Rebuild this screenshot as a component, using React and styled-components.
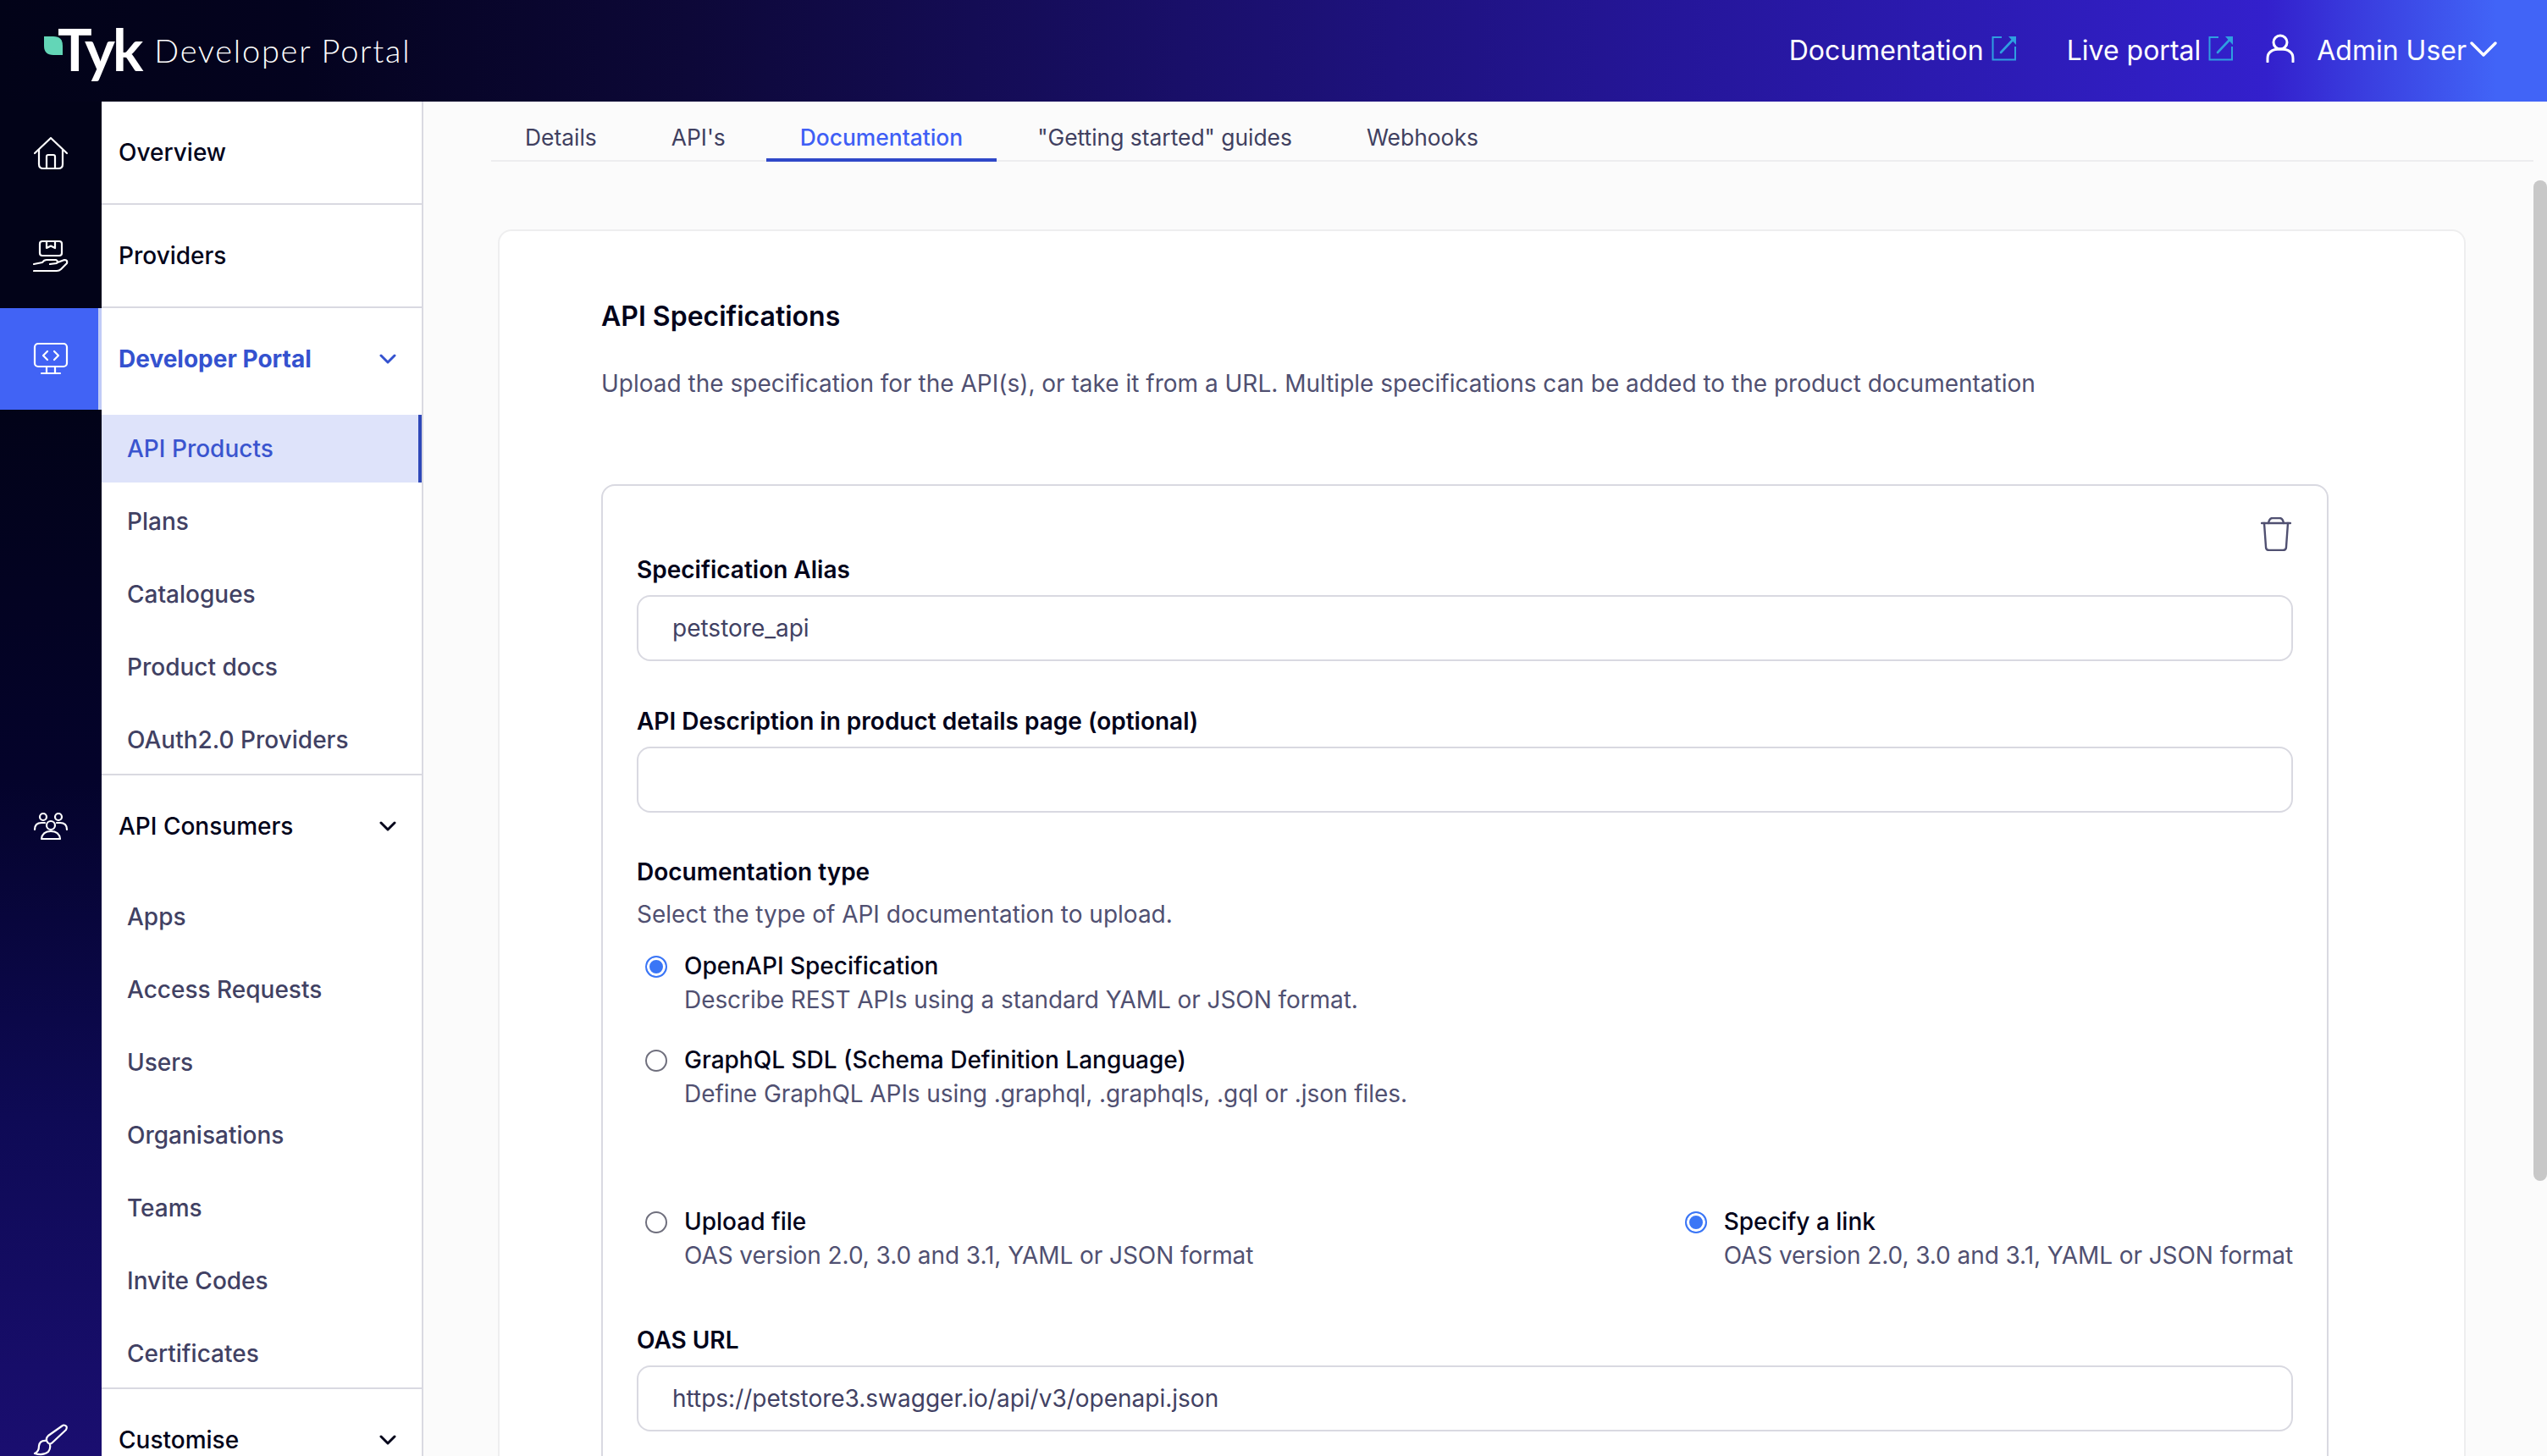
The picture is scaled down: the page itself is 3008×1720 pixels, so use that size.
import React from 'react';
import styled, { createGlobalStyle } from 'styled-components';

const GlobalStyle = createGlobalStyle`
  html, body {
    margin: 0;
    padding: 0;
    height: 100%;
    overflow: hidden;
    background: #fbfbfb;
    font-family: Inter, "Liberation Sans", sans-serif;
    color: #02031a;
  }
  * { box-sizing: border-box; }
`;

const Page = styled.div`
  width: 3008px;
  height: 1720px;
  display: flex;
  flex-direction: column;
  overflow: hidden;
`;

const Header = styled.header`
  flex: 0 0 120px;
  display: flex;
  align-items: center;
  padding: 0 59px 0 52px;
  background: linear-gradient(90deg, #020318 0%, #04031f 12%, #0d0838 27%, #25169a 66%, #3320cc 89%, #3a3fe0 93%, #4164f7 98%);
`;

const Logo = styled.div`
  display: flex;
  align-items: center;
  color: #fff;
`;

const Leaf = styled.svg`
  width: 22px;
  height: 22px;
  margin: 0 -6px 0 0;
  position: relative;
  top: -6px;
`;

const LogoMark = styled.span`
  font-family: Lato, sans-serif;
  font-weight: 700;
  font-size: 68px;
  letter-spacing: -3px;
  line-height: 80px;
  position: relative;
  top: -2px;
`;

const LogoText = styled.span`
  font-family: Lato, sans-serif;
  font-weight: 300;
  font-size: 38px;
  letter-spacing: 1.75px;
  margin-left: 16px;
  position: relative;
  top: -1px;
`;

const TopNav = styled.nav`
  margin-left: auto;
  display: flex;
  align-items: center;
`;

const TopLink = styled.a`
  display: flex;
  align-items: center;
  color: #fff;
  font-size: 32px;
  line-height: 40px;
  margin-right: ${(p) => p.$gap}px;
`;

const ExternalIcon = styled.svg`
  width: 30px;
  height: 30px;
  margin: -6px 0 0 9px;
`;

const UserIcon = styled.svg`
  width: 34px;
  height: 34px;
  margin: -6px 26px 0 0;
`;

const Caret = styled.svg`
  width: 32px;
  height: 18px;
  margin: -4px 0 0 4px;
`;

const Body = styled.div`
  flex: 1;
  display: flex;
  min-height: 0;
`;

const Rail = styled.aside`
  flex: 0 0 120px;
  display: flex;
  flex-direction: column;
  background: linear-gradient(180deg, #020318 0%, #020318 22%, #04032b 50%, #0e0a55 75%, #1a0e70 100%);
`;

const RailItem = styled.div`
  flex: 0 0 ${(p) => p.$height}px;
  margin-top: ${(p) => p.$offset || 0}px;
  display: flex;
  align-items: center;
  justify-content: center;
  background: ${(p) => (p.$active ? '#4163f5' : 'transparent')};
  border-right: ${(p) => (p.$active ? '4px solid #c0cbf6' : 'none')};
  padding-left: ${(p) => (p.$active ? '4px' : '0')};
`;

const RailIcon = styled.svg`
  width: 42px;
  height: 40px;
  fill: none;
  stroke: #fff;
  stroke-width: 2.2;
  stroke-linecap: round;
  stroke-linejoin: round;
`;

const Sidebar = styled.aside`
  flex: 0 0 380px;
  background: #fff;
  border-right: 2px solid #d9d9e1;
  display: flex;
  flex-direction: column;
`;

const NavGroup = styled.div`
  border-bottom: 2px solid #d9d9e1;
  &:last-child { border-bottom: none; }
`;

const NavHead = styled.div`
  height: 120px;
  display: flex;
  align-items: center;
  justify-content: space-between;
  padding: 0 30px 0 20px;
  font-size: 28px;
  font-weight: ${(p) => (p.$active ? 700 : 500)};
  color: ${(p) => (p.$active ? '#3452cf' : '#02031a')};
`;

const NavChevron = styled.svg`
  width: 20px;
  height: 14px;
  fill: none;
  stroke: ${(p) => (p.$active ? '#3452cf' : '#02031a')};
  stroke-width: 3;
  stroke-linecap: round;
  stroke-linejoin: round;
`;

const NavList = styled.div`
  display: flex;
  flex-direction: column;
  gap: 6px;
  padding-top: ${(p) => p.$top || 0}px;
`;

const NavItem = styled.div`
  height: 80px;
  padding-left: 30px;
  display: flex;
  align-items: center;
  font-size: 28px;
  font-weight: 500;
  color: ${(p) => (p.$active ? '#3a55cf' : '#414163')};
  background: ${(p) => (p.$active ? '#dee3fa' : 'transparent')};
  border-right: ${(p) => (p.$active ? '4px solid #2f48b8' : 'none')};
`;

const Main = styled.main`
  position: relative;
  flex: 1;
  min-width: 0;
  overflow: hidden;
  background: #fbfbfb;
  padding-left: 80px;
`;

const ScrollThumb = styled.div`
  position: absolute;
  right: 0;
  top: 93px;
  width: 16px;
  height: 1182px;
  background: #c8c8c8;
  border-radius: 8px;
`;

const Tabs = styled.div`
  height: 71px;
  margin-right: 16px;
  display: flex;
  gap: 8px;
  border-bottom: 2px solid #ededef;
`;

const Tab = styled.div`
  height: 71px;
  padding: 12px 40px 0;
  display: flex;
  align-items: center;
  font-size: 26.4px;
  white-space: nowrap;
  color: ${(p) => (p.$active ? '#3f5ff5' : '#404060')};
  font-weight: ${(p) => (p.$active ? 500 : 400)};
  box-shadow: ${(p) => (p.$active ? 'inset 0 -4px 0 #2f48c8' : 'none')};
`;

const Card = styled.section`
  width: 2324px;
  margin: 80px 0 0 8px;
  padding: 77px 160px 0 120px;
  background: #fff;
  border: 2px solid #eeeeef;
  border-bottom: none;
  border-radius: 16px 16px 0 0;
`;

const Title = styled.h2`
  margin: 0;
  font-size: 32px;
  line-height: 48px;
  font-weight: 600;
  color: #02031a;
`;

const Lead = styled.p`
  margin: 35px 0 0;
  font-size: 28px;
  line-height: 40px;
  color: #505071;
`;

const SpecBox = styled.div`
  margin-top: 99px;
  height: 1300px;
  padding: 0 40px;
  border: 2px solid #d9d9e1;
  border-radius: 16px;
`;

const TrashRow = styled.div`
  display: flex;
  justify-content: flex-end;
  padding: 37px 2px 0 0;
  height: 79px;
`;

const TrashIcon = styled.svg`
  width: 36px;
  height: 40px;
  fill: none;
  stroke: #505071;
  stroke-width: 2.4;
  stroke-linecap: round;
  stroke-linejoin: round;
`;

const Label = styled.label`
  display: block;
  margin-top: ${(p) => p.$top || 0}px;
  font-size: 28px;
  line-height: 40px;
  font-weight: 600;
  color: #02031a;
`;

const Hint = styled.p`
  margin: 10px 0 0;
  font-size: 28px;
  line-height: 40px;
  color: #505071;
`;

const TextInput = styled.input`
  display: block;
  width: 100%;
  height: 78px;
  margin-top: 10px;
  padding: 0 40px;
  font-family: inherit;
  font-size: 28px;
  color: #414163;
  background: #fff;
  border: 2px solid #d9d9e1;
  border-radius: 16px;
  outline: none;
`;

const Option = styled.div`
  display: flex;
  margin-top: ${(p) => p.$top || 0}px;
`;

const OptionRow = styled.div`
  display: flex;
  justify-content: space-between;
  margin-top: 111px;
`;

const Radio = styled.span`
  flex: 0 0 26px;
  height: 26px;
  margin: 8px 20px 0 10px;
  border-radius: 50%;
  border: 2px solid ${(p) => (p.$checked ? '#3b76f6' : '#6f6f7d')};
  background: ${(p) => (p.$checked ? '#3b76f6' : '#fff')};
  box-shadow: ${(p) => (p.$checked ? 'inset 0 0 0 3px #fff' : 'none')};
`;

const OptionTitle = styled.div`
  font-size: 28px;
  line-height: 40px;
  font-weight: 500;
  color: #02031a;
`;

const OptionText = styled.div`
  font-size: 28px;
  line-height: 40px;
  letter-spacing: -0.07px;
  color: #505071;
`;

const consumerItems = ['Apps', 'Access Requests', 'Users', 'Organisations', 'Teams', 'Invite Codes', 'Certificates'];
const devPortalItems = ['API Products', 'Plans', 'Catalogues', 'Product docs', 'OAuth2.0 Providers'];
const tabs = ['Details', "API's", 'Documentation', '"Getting started" guides', 'Webhooks'];

const External = () => (
  <ExternalIcon viewBox="0 0 30 30" fill="none" stroke="#2f9fe0">
    <path d="M12 2H1.5V28.5H28V13" strokeWidth="2" />
    <path d="M11 20L27 3" strokeWidth="2.6" strokeLinecap="round" />
    <path d="M20 1H29V11Z" fill="#2f9fe0" strokeWidth="0" />
  </ExternalIcon>
);

const Chevron = ({ active }) => (
  <NavChevron $active={active} viewBox="0 0 20 14">
    <path d="M2 3L10 11L18 3" />
  </NavChevron>
);

const Choice = ({ checked, title, text, top }) => (
  <Option $top={top}>
    <Radio $checked={checked} />
    <div>
      <OptionTitle>{title}</OptionTitle>
      <OptionText>{text}</OptionText>
    </div>
  </Option>
);

export default function App() {
  return (
    <Page>
      <GlobalStyle />
      <Header>
        <Logo>
          <Leaf viewBox="0 0 22 22">
            <path d="M0 0H11Q22 0 22 11V22H11Q0 22 0 11Z" fill="#63d6b7" />
          </Leaf>
          <LogoMark>Tyk</LogoMark>
          <LogoText>Developer Portal</LogoText>
        </Logo>
        <TopNav>
          <TopLink $gap={59}>Documentation<External /></TopLink>
          <TopLink $gap={38}>Live portal<External /></TopLink>
          <UserIcon viewBox="0 0 34 34" fill="none" stroke="#fff" strokeWidth="3" strokeLinecap="round">
            <circle cx="17" cy="10" r="8" />
            <path d="M2 33V29Q2 18 17 18Q32 18 32 29V33" />
          </UserIcon>
          <TopLink $gap={0}>Admin User</TopLink>
          <Caret viewBox="0 0 32 18" fill="none" stroke="#fff" strokeWidth="3.4" strokeLinecap="round" strokeLinejoin="round">
            <path d="M2 2L16 16L30 2" />
          </Caret>
        </TopNav>
      </Header>
      <Body>
        <Rail>
          <RailItem $height={122}>
            <RailIcon viewBox="0 0 42 40">
              <path d="M2 20L21 2L40 20" />
              <path d="M7 16V33Q7 38 12 38H30Q35 38 35 33V16" />
              <path d="M16 38V24Q16 22 18 22H24Q26 22 26 24V38" />
            </RailIcon>
          </RailItem>
          <RailItem $height={122}>
            <RailIcon viewBox="0 0 42 40">
              <rect x="8" y="2" width="26" height="17" rx="3" />
              <path d="M16 2V10L21 7.5L26 10V2" />
              <path d="M1 29L11 27Q13 24 16 24H27Q30 25 28 28L20 29" />
              <path d="M29 27L37 24Q41 24 40 28L33 35Q31 37 28 37H1" />
            </RailIcon>
          </RailItem>
          <RailItem $height={120} $active>
            <RailIcon viewBox="0 0 42 40">
              <rect x="2" y="2" width="38" height="27" rx="4" />
              <path d="M17 11L12 16L17 21M25 11L30 16L25 21" />
              <path d="M16 29V37M26 29V37M10 37H32" />
            </RailIcon>
          </RailItem>
          <RailItem $height={120} $offset={432}>
            <RailIcon viewBox="0 0 42 40">
              <circle cx="12" cy="9" r="4" />
              <circle cx="30" cy="9" r="4" />
              <circle cx="21" cy="19" r="5" />
              <path d="M2 24Q2 16 10 16H14" />
              <path d="M40 24Q40 16 32 16H28" />
              <path d="M10 35Q11 26 21 26Q31 26 32 35Z" />
            </RailIcon>
          </RailItem>
          <RailItem $height={120} $offset={605}>
            <RailIcon viewBox="0 0 42 40">
              <path d="M35 3L18 15Q15 18 16 21Q19 27 23 23L39 8Q41 4 38 3Q36 2 35 3Z" />
              <path d="M16 21Q8 20 7 27Q7 34 2 36Q12 39 18 34Q21 30 20 26" />
            </RailIcon>
          </RailItem>
        </Rail>
        <Sidebar>
          <NavGroup><NavHead>Overview</NavHead></NavGroup>
          <NavGroup><NavHead>Providers</NavHead></NavGroup>
          <NavGroup>
            <NavHead $active>Developer Portal<Chevron active /></NavHead>
            <NavList $top={6}>
              {devPortalItems.map((item, i) => (
                <NavItem key={item} $active={i === 0}>{item}</NavItem>
              ))}
            </NavList>
          </NavGroup>
          <NavGroup>
            <NavHead>API Consumers<Chevron /></NavHead>
            <NavList $top={7}>
              {consumerItems.map((item) => (
                <NavItem key={item}>{item}</NavItem>
              ))}
            </NavList>
          </NavGroup>
          <NavGroup><NavHead>Customise<Chevron /></NavHead></NavGroup>
        </Sidebar>
        <Main>
          <Tabs>
            {tabs.map((tab) => (
              <Tab key={tab} $active={tab === 'Documentation'}>{tab}</Tab>
            ))}
          </Tabs>
          <Card>
            <Title>API Specifications</Title>
            <Lead>Upload the specification for the API(s), or take it from a URL. Multiple specifications can be added to the product documentation</Lead>
            <SpecBox>
              <TrashRow>
                <TrashIcon viewBox="0 0 36 40">
                  <path d="M1 7H35" />
                  <path d="M9 7Q10 1 14 1H22Q26 1 27 7" />
                  <path d="M4 7L6 35Q6 39 10 39H26Q30 39 30 35L32 7" />
                </TrashIcon>
              </TrashRow>
              <Label>Specification Alias</Label>
              <TextInput defaultValue="petstore_api" readOnly />
              <Label $top={51}>API Description in product details page (optional)</Label>
              <TextInput readOnly />
              <Label $top={50}>Documentation type</Label>
              <Hint>Select the type of API documentation to upload.</Hint>
              <Choice top={21} checked title="OpenAPI Specification" text="Describe REST APIs using a standard YAML or JSON format." />
              <Choice top={31} title="GraphQL SDL (Schema Definition Language)" text="Define GraphQL APIs using .graphql, .graphqls, .gql or .json files." />
              <OptionRow>
                <Choice title="Upload file" text="OAS version 2.0, 3.0 and 3.1, YAML or JSON format" />
                <Choice checked title="Specify a link" text="OAS version 2.0, 3.0 and 3.1, YAML or JSON format" />
              </OptionRow>
              <Label $top={60}>OAS URL</Label>
              <TextInput defaultValue="https://petstore3.swagger.io/api/v3/openapi.json" readOnly />
            </SpecBox>
          </Card>
          <ScrollThumb />
        </Main>
      </Body>
    </Page>
  );
}
